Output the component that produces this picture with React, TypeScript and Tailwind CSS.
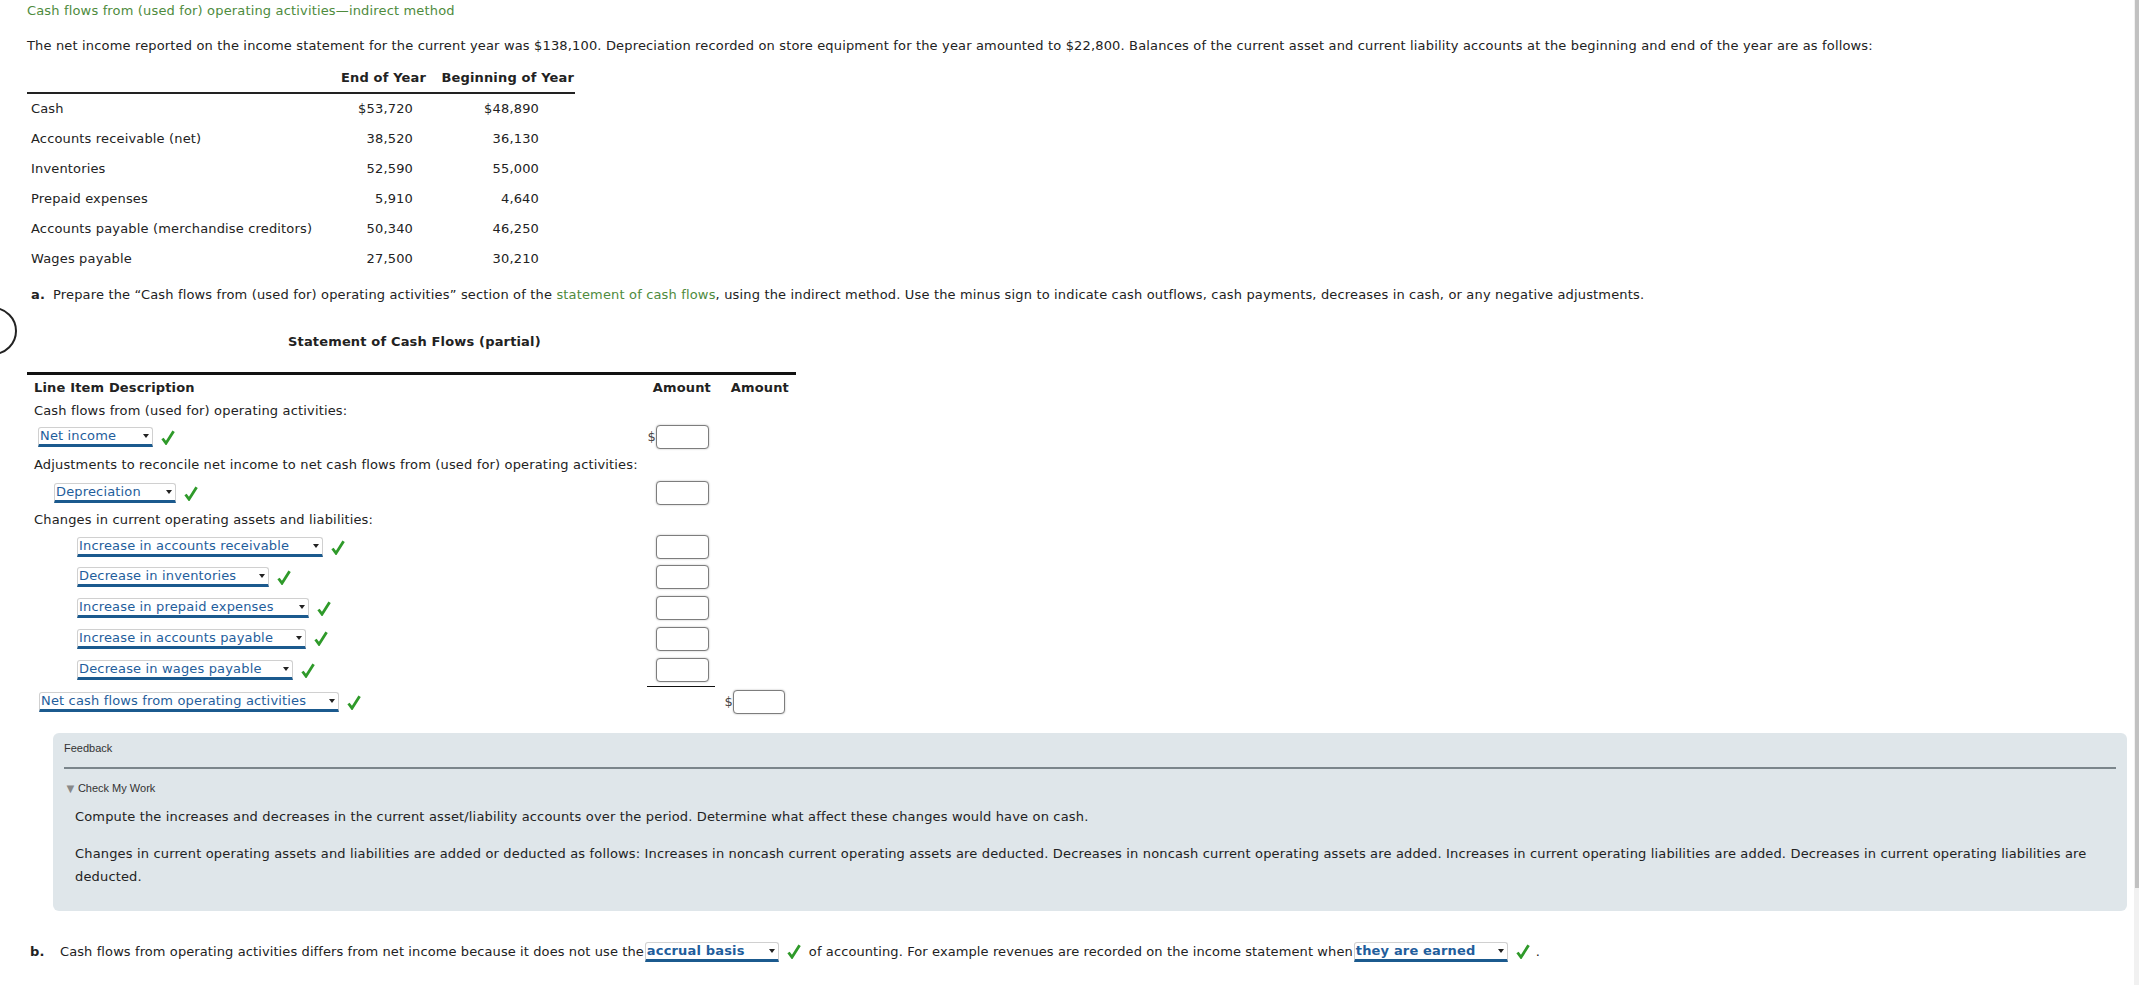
import { useState } from 'react'

const balances = [
  ['Cash', '$53,720', '$48,890'],
  ['Accounts receivable (net)', '38,520', '36,130'],
  ['Inventories', '52,590', '55,000'],
  ['Prepaid expenses', '5,910', '4,640'],
  ['Accounts payable (merchandise creditors)', '50,340', '46,250'],
  ['Wages payable', '27,500', '30,210'],
]

function Check() {
  return (
    <svg width="14" height="15" viewBox="0 0 14 15" className="shrink-0">
      <path d="M1.5 8.5 L5 13.2 L12.6 1.2" fill="none" stroke="#2f9a2a" strokeWidth="2.8" strokeLinejoin="miter" />
    </svg>
  )
}

function Pick({ label, width, bold }: { label: string; width: string; bold?: boolean }) {
  return (
    <span
      className={`inline-flex items-center justify-between h-[20px] bg-white border border-[#d0d0d0] border-b-[3px] border-b-[#1b5a8e] rounded-t-[3px] pl-[1px] pr-[3px] text-[#1f5e9c] align-middle ${width} ${bold ? 'font-bold' : ''}`}
    >
      <span className="leading-[16px] whitespace-nowrap">{label}</span>
      <span className="w-0 h-0 border-x-[3px] border-x-transparent border-t-[4px] border-t-[#222]" />
    </span>
  )
}

function Box({ dollar, w = 'w-[53px]' }: { dollar?: boolean; w?: string }) {
  const [val, setVal] = useState('')
  return (
    <div className="flex items-center">
      {dollar && <span className="text-[#444]">$</span>}
      <input
        value={val}
        onChange={(e) => setVal(e.target.value)}
        className={`${w} h-[24px] rounded-[4px] border border-[#7d7d7d] bg-white shadow-[0_0_2px_rgba(0,0,0,0.3)] outline-none`}
      />
    </div>
  )
}

function Line({
  h,
  pl,
  children,
  col1,
  col2,
}: {
  h: string
  pl: string
  children?: React.ReactNode
  col1?: React.ReactNode
  col2?: React.ReactNode
}) {
  return (
    <div className={`flex items-center ${h}`}>
      <div className={`flex-1 flex items-center gap-[8px] ${pl}`}>{children}</div>
      <div className="w-[68px] flex justify-end pr-[6px]">{col1}</div>
      <div className="w-[81px] flex justify-end pr-[11px]">{col2}</div>
    </div>
  )
}

export default function App() {
  return (
    <div className="flex h-[985px] w-full overflow-hidden bg-white text-[13px] tracking-[0.16px] text-[#222] font-['DejaVu_Sans',Verdana,sans-serif]">
      <div className="relative flex-1 flex flex-col">
        {/* stray cursor ring on the left edge */}
        <div className="absolute left-[-31px] top-[307px] w-[48px] h-[48px] rounded-full border-2 border-[#222]" />

        <div className="ml-[27px] h-[22px] leading-[22px] text-[#4e8b3d]">
          Cash flows from (used for) operating activities—indirect method
        </div>
        <p className="ml-[27px] mt-[13px] h-[22px] leading-[22px]">
          The net income reported on the income statement for the current year was $138,100. Depreciation recorded on
          store equipment for the year amounted to $22,800. Balances of the current asset and current liability accounts
          at the beginning and end of the year are as follows:
        </p>

        <div className="ml-[27px] mt-[7px] w-[548px]">
          <div className="flex items-center h-[30px] border-b-2 border-[#222] font-bold">
            <div className="flex-1" />
            <div className="w-[98px] text-right pr-[7px]">End of Year</div>
            <div className="w-[142px] text-right pr-[1px]">Beginning of Year</div>
          </div>
          {balances.map(([name, end, begin]) => (
            <div key={name} className="flex items-center h-[30px]">
              <div className="flex-1 pl-[4px]">{name}</div>
              <div className="w-[98px] text-right pr-[20px]">{end}</div>
              <div className="w-[142px] text-right pr-[36px]">{begin}</div>
            </div>
          ))}
        </div>

        <div className="ml-[31px] mt-[10px] h-[22px] leading-[22px]">
          <span className="font-bold mr-[8px]">a.</span>
          Prepare the “Cash flows from (used for) operating activities” section of the{' '}
          <span className="text-[#4e8b3d]">statement of cash flows</span>, using the indirect method. Use the minus sign
          to indicate cash outflows, cash payments, decreases in cash, or any negative adjustments.
        </div>

        <div className="ml-[27px] w-[769px]">
          <div className="mt-[25px] h-[22px] leading-[22px] pl-[261px] font-bold">Statement of Cash Flows (partial)</div>
          <div className="mt-[19px] h-[3px] bg-[#111]" />
          <div className="mt-[2px]">
            <Line
              h="h-[22px]"
              pl="pl-[7px]"
              col1={<span className="font-bold -mr-[2px]">Amount</span>}
              col2={<span className="font-bold -mr-[4px]">Amount</span>}
            >
              <span className="font-bold">Line Item Description</span>
            </Line>
            <Line h="h-[24px]" pl="pl-[7px]">Cash flows from (used for) operating activities:</Line>
            <Line h="h-[28px]" pl="pl-[11px]" col1={<Box dollar />}>
              <Pick label="Net income" width="w-[115px]" />
              <Check />
            </Line>
            <Line h="h-[28px]" pl="pl-[7px]">
              Adjustments to reconcile net income to net cash flows from (used for) operating activities:
            </Line>
            <Line h="h-[28px]" pl="pl-[27px]" col1={<Box />}>
              <Pick label="Depreciation" width="w-[122px]" />
              <Check />
            </Line>
            <Line h="h-[26px]" pl="pl-[7px]">Changes in current operating assets and liabilities:</Line>
            <Line h="h-[28px]" pl="pl-[50px]" col1={<Box />}>
              <Pick label="Increase in accounts receivable" width="w-[246px]" />
              <Check />
            </Line>
            <Line h="h-[32px]" pl="pl-[50px]" col1={<Box />}>
              <Pick label="Decrease in inventories" width="w-[192px]" />
              <Check />
            </Line>
            <Line h="h-[30px]" pl="pl-[50px]" col1={<Box />}>
              <Pick label="Increase in prepaid expenses" width="w-[232px]" />
              <Check />
            </Line>
            <Line h="h-[31px]" pl="pl-[50px]" col1={<Box />}>
              <Pick label="Increase in accounts payable" width="w-[229px]" />
              <Check />
            </Line>
            <Line h="h-[32px]" pl="pl-[50px]" col1={<Box />}>
              <Pick label="Decrease in wages payable" width="w-[216px]" />
              <Check />
            </Line>
            <div className="flex h-[1px]">
              <div className="flex-1" />
              <div className="w-[68px] bg-[#111]" />
              <div className="w-[81px]" />
            </div>
            <Line h="h-[30px]" pl="pl-[12px]" col2={<Box dollar w="w-[52px]" />}>
              <Pick label="Net cash flows from operating activities" width="w-[300px]" />
              <Check />
            </Line>
          </div>
        </div>

        <div className="ml-[53px] mr-[7px] mt-[16px] rounded-[6px] bg-[#dfe6ea] px-[11px] pb-[23px]">
          <div className="h-[30px] leading-[30px] text-[11px] tracking-normal font-['Liberation_Sans',Arial,sans-serif] text-[#333]">
            Feedback
          </div>
          <div className="mt-[4px] h-[2px] bg-[#7b858b]" />
          <div className="mt-[9px] h-[20px] flex items-center text-[11px] tracking-normal font-['Liberation_Sans',Arial,sans-serif] text-[#333]">
            <span className="text-[#888] text-[13px] mr-[1px] leading-none">▼</span>
            Check My Work
          </div>
          <div className="ml-[11px] mt-[8px] h-[22px] leading-[22px]">
            Compute the increases and decreases in the current asset/liability accounts over the period. Determine what
            affect these changes would have on cash.
          </div>
          <p className="ml-[11px] mr-[20px] mt-[14px] leading-[23px]">
            Changes in current operating assets and liabilities are added or deducted as follows: Increases in noncash
            current operating assets are deducted. Decreases in noncash current operating assets are added. Increases in
            current operating liabilities are added. Decreases in current operating liabilities are deducted.
          </p>
        </div>

        <div className="ml-[30px] mt-[30px] h-[22px] flex items-center whitespace-nowrap">
          <span className="font-bold w-[30px]">b.</span>
          <span className="tracking-[0.1px]">
            Cash flows from operating activities differs from net income because it does not use the
          </span>
          <span className="ml-[1px]">
            <Pick label="accrual basis" width="w-[134px]" bold />
          </span>
          <span className="ml-[8px]">
            <Check />
          </span>
          <span className="ml-[8px] tracking-[0.1px]">
            of accounting. For example revenues are recorded on the income statement when
          </span>
          <span className="ml-[1px]">
            <Pick label="they are earned" width="w-[154px]" bold />
          </span>
          <span className="ml-[8px]">
            <Check />
          </span>
          <span className="ml-[6px]">.</span>
        </div>

        <div className="shrink-0 ml-[53px] mr-[7px] mt-[23px] h-[10px] rounded-t-[6px] bg-[#dfe6ea]" />
      </div>

      <div className="w-[5px] bg-[#f1f1f1] flex flex-col">
        <div className="h-[888px] bg-[#c1c1c1] ml-[1px]" />
      </div>
    </div>
  )
}
